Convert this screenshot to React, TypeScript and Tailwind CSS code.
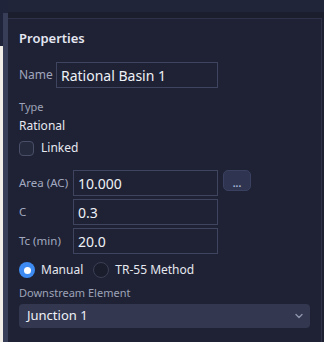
import React from "react";

export default function App() {
  const font = { fontFamily: '"Noto Sans", "Open Sans", sans-serif' };
  return (
    <div className="flex w-[324px] h-[342px] overflow-hidden bg-[#20243a]" style={font}>
      {/* left edge strips */}
      <div className="flex flex-col w-[3px]">
        <div className="h-[46px] bg-[#20243a]" />
        <div className="flex-1 bg-[#f1eee8]" />
      </div>
      <div className="flex flex-col w-[5px]">
        <div className="h-[13px] bg-[#20243a]" />
        <div className="flex-1 bg-[#383d58]" />
      </div>
      {/* main */}
      <div className="flex flex-col flex-1">
        <div className="h-[12px] bg-[#21253a]" />
        <div className="h-[6px] bg-[#1b1e2c]" />
        <div className="flex flex-1">
          <div className="flex-1 flex flex-col bg-[#1f2234] border-t border-r border-[#2e3249] pl-[11px] pr-[11px]">
            <div className="pt-[11px] text-[13px] leading-[16px] font-semibold text-[#e4e7f2]">
              Properties
            </div>
            <div className="mt-[16px] flex items-center h-[26px]">
              <span className="text-[12px] text-[#a0a6bd] w-[37px]">Name</span>
              <div className="w-[162px] h-[26px] border border-[#40455f] flex items-center pl-[4px] text-[14px] text-[#eef0f7]">
                Rational Basin 1
              </div>
            </div>
            <div className="mt-[12px] text-[11px] leading-[14px] text-[#9da3b8]">Type</div>
            <div className="mt-[4px] text-[12px] leading-[16px] text-[#e6e8f0]">Rational</div>
            <div className="mt-[6px] flex items-center h-[16px]">
              <div className="w-[15px] h-[15px] rounded-[4px] border border-[#4a4f68] bg-[#262a3d]" />
              <span className="ml-[7px] text-[12px] text-[#e6e8f0]">Linked</span>
            </div>
            <div className="mt-[14px] flex flex-col gap-[3px]">
              <div className="flex items-center h-[26px]">
                <span className="text-[11.5px] text-[#a3a9c0] w-[54px]">Area (AC)</span>
                <div className="w-[145px] h-[26px] border border-[#40455f] flex items-center pl-[4px] text-[14px] text-[#eef0f7]">
                  10.000
                </div>
                <div className="ml-[5px] self-start w-[28px] h-[21px] rounded-[5px] bg-[#2f3550] border border-[#3a4060] flex items-end justify-center pb-[2px] text-[10px] leading-none text-[#a8b8d8] font-bold">
                  ...
                </div>
              </div>
              <div className="flex items-center h-[26px]">
                <span className="text-[11.5px] text-[#a3a9c0] w-[54px]">C</span>
                <div className="w-[145px] h-[26px] border border-[#40455f] flex items-center pl-[4px] text-[14px] text-[#eef0f7]">
                  0.3
                </div>
              </div>
              <div className="flex items-center h-[26px]">
                <span className="text-[11.5px] text-[#a3a9c0] w-[54px]">Tc (min)</span>
                <div className="w-[145px] h-[26px] border border-[#40455f] flex items-center pl-[4px] text-[14px] text-[#eef0f7]">
                  20.0
                </div>
              </div>
            </div>
            <div className="mt-[8px] flex items-center h-[16px]">
              <div className="w-[16px] h-[16px] rounded-full bg-[#3d8bf2] flex items-center justify-center">
                <div className="w-[7px] h-[7px] rounded-full bg-white" />
              </div>
              <span className="ml-[6px] text-[12px] text-[#e6e8f0]">Manual</span>
              <div className="ml-[10px] w-[16px] h-[16px] rounded-full bg-[#1a1d2c] border border-[#3a3f55]" />
              <span className="ml-[6px] text-[12px] text-[#e6e8f0]">TR-55 Method</span>
            </div>
            <div className="mt-[8px] text-[11px] leading-[14px] text-[#9da3b8]">Downstream Element</div>
            <div className="mt-[4px] w-[291px] h-[24px] rounded-[4px] bg-[#333850] flex items-center justify-between pl-[8px] pr-[6px]">
              <span className="text-[13px] text-[#eef0f7]">Junction 1</span>
              <svg width="10" height="10" viewBox="0 0 10 10" fill="none">
                <path d="M2 3.5 L5 6.5 L8 3.5" stroke="#8e94ab" strokeWidth="1.4" strokeLinecap="round" strokeLinejoin="round" />
              </svg>
            </div>
          </div>
          <div className="w-[2px] bg-[#1d2031]" />
        </div>
      </div>
    </div>
  );
}
